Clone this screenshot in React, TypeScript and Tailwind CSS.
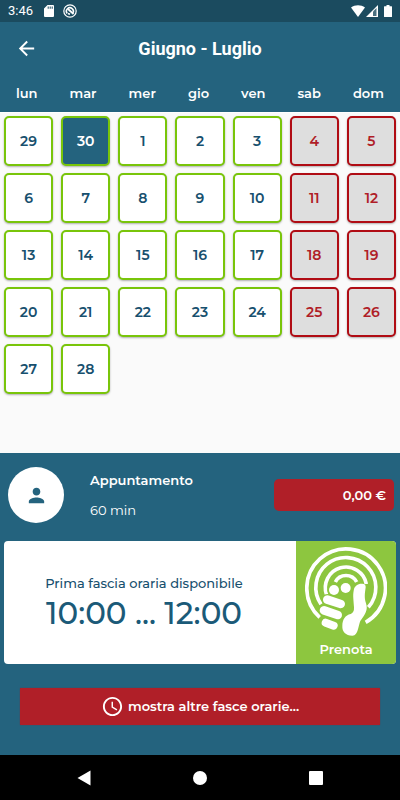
import React from "react";

const weekdays = ["lun", "mar", "mer", "gio", "ven", "sab", "dom"];
const days = [29, 30, ...Array.from({ length: 28 }, (_, i) => i + 1)];

function dayClass(index: number) {
  if (index === 1) return "border-[#79c50a] bg-[#24637e] text-white";
  if (index % 7 > 4) return "border-[#b00c14] bg-[#dedede] text-[#b01e28]";
  return "border-[#79c50a] bg-white text-[#17506e]";
}

function StatusBar() {
  return (
    <div className="flex h-[22px] items-center bg-[#1b4b5f] px-2 text-white">
      <span className="w-9 font-[Roboto,sans-serif] text-[13px] leading-4">3:46</span>
      <svg className="h-3 w-[10px]" viewBox="0 0 10 12" fill="currentColor" aria-hidden="true">
        <path fillRule="evenodd" d="M3.500 0H9a1 1 0 0 1 1 1v10a1 1 0 0 1-1 1H1a1 1 0 0 1-1-1V3.500zM3.700 1.500v2.200h1V1.500zM5.700 1.500v2.200h1V1.500zM7.700 1.500v2.200h1V1.500z" />
      </svg>
      <svg className="ml-[9px] size-[14px]" viewBox="0 0 14 14" fill="none" stroke="currentColor" aria-hidden="true">
        <circle cx="7" cy="7" r="6.200" strokeWidth="1.200" />
        <path d="M4.200 9.500A3.500 3.500 0 1 1 9.800 9.200" strokeWidth="1.500" />
        <path d="M5 5l5.500 5M5 9.500l2 .8" strokeWidth="1.700" />
      </svg>
      <div className="ml-auto flex items-center">
        <svg className="h-3 w-[14px]" viewBox="0 0 14 12" fill="currentColor" aria-hidden="true">
          <path d="M0 2.500C4 -.5 10 -.5 14 2.500L7 12z" />
        </svg>
        <svg className="ml-px size-3" viewBox="0 0 12 12" aria-hidden="true">
          <path d="M12 0v12H0z" fill="#ffffff" />
          <path d="M7 6.500V11h3.500V3z" fill="#1b4b5f" opacity=".8" />
        </svg>
        <svg className="ml-[6px] h-3 w-2" viewBox="0 0 8 12" fill="currentColor" aria-hidden="true">
          <path d="M2.500 0h3v1.200H7.500q.5 0 .5.5v9.800q0 .5-.5.5h-7q-.5 0-.5-.5V1.700q0-.5.5-.5h2z" />
        </svg>
      </div>
    </div>
  );
}

function ThumbLogo() {
  return (
    <svg className="h-[90px] w-[82px]" viewBox="46 33 246 270" aria-hidden="true">
      <g fill="none" stroke="#ffffff" strokeWidth="11">
        <path d="M90 244A118 118 0 1 1 228 259" />
        <path d="M94 205A90 90 0 1 1 236 214" />
        <path d="M111 177A62 62 0 1 1 230 144" />
        <path d="M137 138A36 36 0 0 1 201 138" />
      </g>
      <g fill="#ffffff">
        <circle cx="133" cy="162" r="20" fill="#8dc63f" />
        <circle cx="168" cy="156" r="20" fill="#8dc63f" />
        <circle cx="133" cy="162" r="15" />
        <circle cx="168" cy="156" r="15" />
        <path d="M192 164C194 148 206 142 218 143Q229 144 228 154C226 170 223 184 229 202C236 222 226 236 214 252C205 264 208 299 188 299C168 299 157 287 158 270C158 250 167 238 183 234Q194 230 193 214C192 192 189 180 192 164Z" />
      </g>
      <g strokeLinecap="round">
        <path d="M113 191L153 204" stroke="#8dc63f" strokeWidth="34" />
        <path d="M113 191L153 204" stroke="#ffffff" strokeWidth="26" />
        <path d="M103 223L144 237" stroke="#8dc63f" strokeWidth="32" />
        <path d="M103 223L144 237" stroke="#ffffff" strokeWidth="26" />
        <path d="M108 260L132 269" stroke="#ffffff" strokeWidth="24" />
      </g>
    </svg>
  );
}

export default function App() {
  return (
    <div className="flex min-h-screen flex-col bg-[#fafafa] font-[Montserrat,Inter,sans-serif] text-sm">
      <StatusBar />
      <header className="bg-[#24637e] pb-px text-white">
        <div className="grid h-[53px] grid-cols-[52px_1fr_52px] items-center">
          <button type="button" aria-label="Indietro" className="flex h-10 items-center justify-center">
            <svg className="size-[23px]" viewBox="0 0 24 24" fill="currentColor" aria-hidden="true">
              <path d="M20 11H7.830l5.590-5.590L12 4l-8 8 8 8 1.410-1.410L7.830 13H20z" />
            </svg>
          </button>
          <h1 className="text-center font-[Roboto,sans-serif] text-lg leading-6 font-bold">Giugno - Luglio</h1>
        </div>
        <div className="flex h-9 items-center justify-around text-[13px] font-semibold">
          {weekdays.map((day) => (
            <span key={day}>{day}</span>
          ))}
        </div>
      </header>
      <main className="flex-1 border-t border-white px-1 pt-[3px] pb-2">
        <div className="grid grid-cols-7 gap-x-2 gap-y-[7px]">
          {days.map((day, index) => (
            <button
              key={index}
              type="button"
              className={`h-[50px] rounded-[5px] border-2 text-sm font-semibold shadow-[0_1px_2px_rgba(0,0,0,0.3)] ${dayClass(index)}`}
            >
              {day}
            </button>
          ))}
        </div>
      </main>
      <section className="bg-[#24637e] pb-[30px] text-white">
        <div className="flex h-[88px] items-center pr-[6px] pb-1 pl-2">
          <div className="flex size-14 items-center justify-center rounded-full bg-white">
            <svg className="size-[23px]" viewBox="0 0 24 24" fill="#24637e" aria-hidden="true">
              <path d="M12 12c2.210 0 4-1.790 4-4s-1.790-4-4-4-4 1.790-4 4 1.790 4 4 4zm0 2c-2.670 0-8 1.340-8 4v2h16v-2c0-2.660-5.330-4-8-4z" />
            </svg>
          </div>
          <div className="ml-[26px] flex flex-col gap-[10px] text-[13px] leading-5">
            <p className="font-semibold">Appuntamento</p>
            <p>60 min</p>
          </div>
          <p className="ml-auto w-[120px] rounded-[5px] bg-[#b01f28] pr-2 text-right text-[13px] leading-8 font-semibold">0,00 €</p>
        </div>
        <div className="mx-1 flex h-[123px] overflow-hidden rounded-sm bg-white">
          <div className="flex flex-1 flex-col items-center justify-center pr-3 text-[#17506e]">
            <p className="text-[13px] leading-5 font-medium">Prima fascia oraria disponibile</p>
            <p className="text-[31px] leading-10 font-medium text-[#1b5a78]">10:00 ... 12:00</p>
          </div>
          <button type="button" className="flex w-[100px] flex-col items-center gap-[2px] bg-[#8dc63f] pt-[6px] text-[13px] leading-5 font-semibold">
            <ThumbLogo />
            Prenota
          </button>
        </div>
        <div className="mt-6 px-5">
          <button type="button" className="flex h-[37px] w-full items-center justify-center gap-1 rounded-[1px] bg-[#b01f28] text-[13px] font-semibold shadow-[0_0_1px_#b00c14]">
            <svg className="size-[23px]" viewBox="0 0 24 24" fill="currentColor" aria-hidden="true">
              <path d="M11.990 2C6.470 2 2 6.480 2 12s4.470 10 9.990 10C17.520 22 22 17.520 22 12S17.520 2 11.990 2zM12 20c-4.420 0-8-3.580-8-8s3.580-8 8-8 8 3.580 8 8-3.580 8-8 8zm.5-13H11v6l5.250 3.150.750-1.230-4.500-2.670z" />
            </svg>
            mostra altre fasce orarie...
          </button>
        </div>
      </section>
      <nav className="flex h-[45px] items-center bg-black px-[26px] text-white" aria-label="Sistema">
        <button type="button" aria-label="Indietro" className="flex flex-1 justify-center">
          <svg className="size-4" viewBox="0 0 16 16" fill="currentColor" aria-hidden="true">
            <path d="M1.500 8L14.500 .5v15z" />
          </svg>
        </button>
        <button type="button" aria-label="Home" className="flex flex-1 justify-center">
          <span className="size-[14px] rounded-full bg-white" />
        </button>
        <button type="button" aria-label="Recenti" className="flex flex-1 justify-center">
          <span className="size-[14px] rounded-[1px] bg-white" />
        </button>
      </nav>
    </div>
  );
}
